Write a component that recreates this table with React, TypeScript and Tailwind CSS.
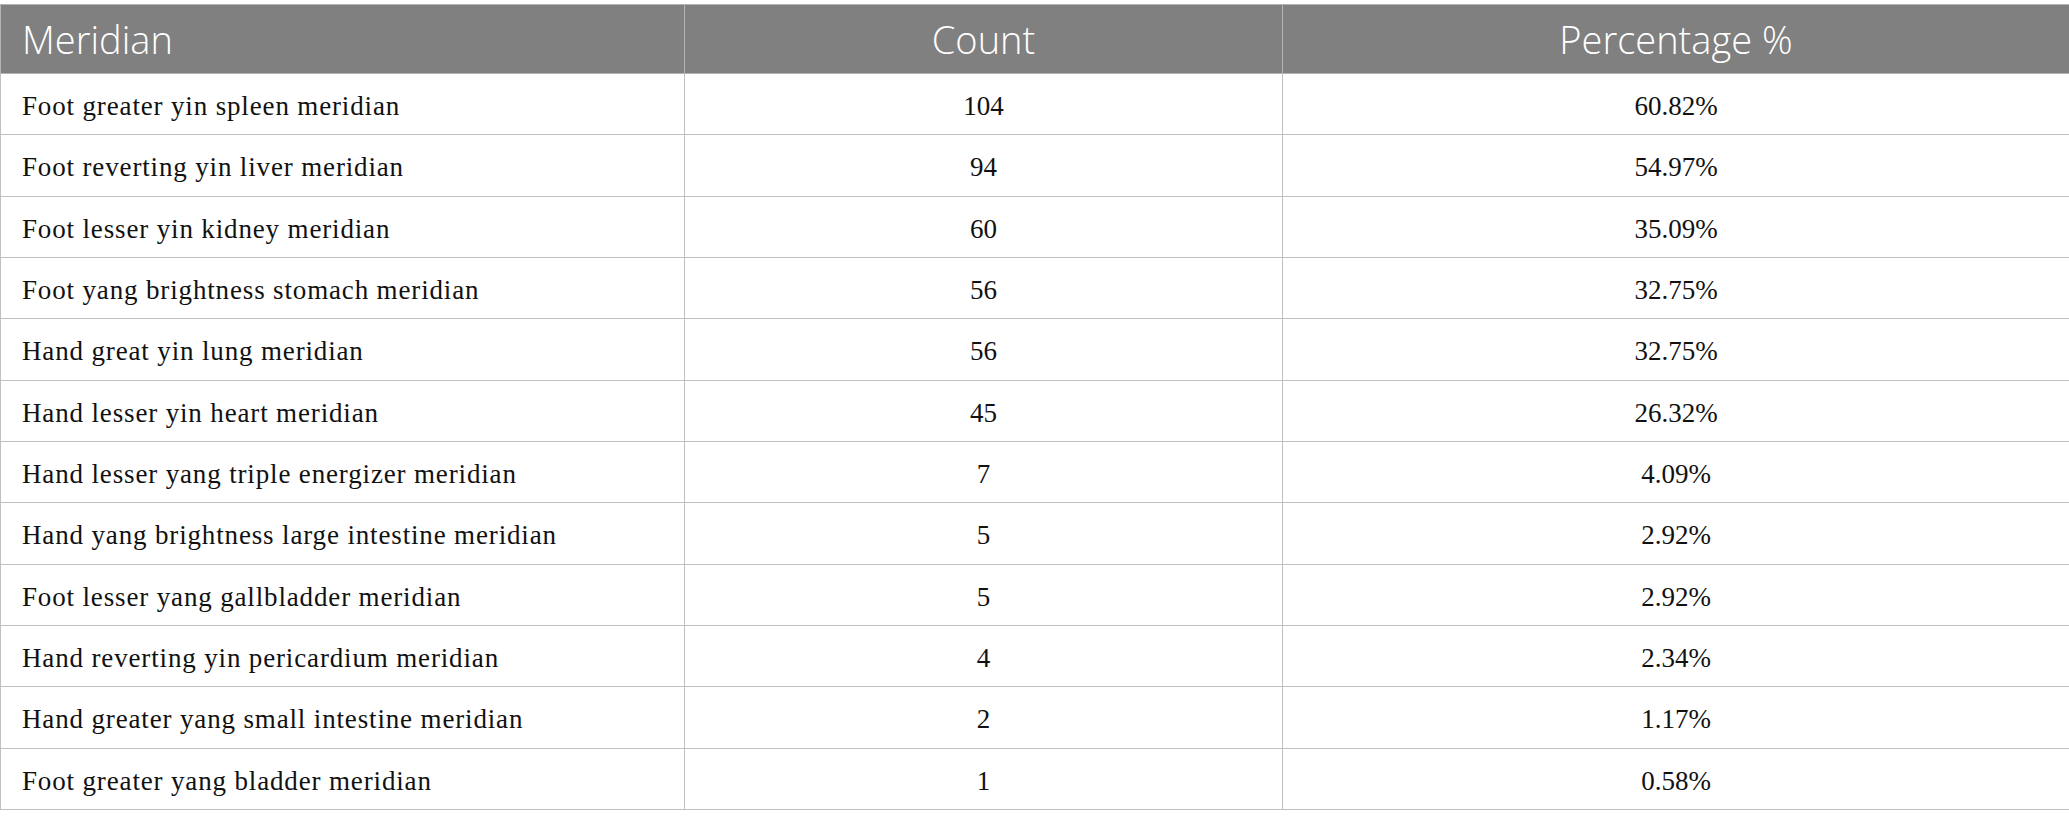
import React from "react";

const rows: [string, string, string][] = [
  ["Foot greater yin spleen meridian", "104", "60.82%"],
  ["Foot reverting yin liver meridian", "94", "54.97%"],
  ["Foot lesser yin kidney meridian", "60", "35.09%"],
  ["Foot yang brightness stomach meridian", "56", "32.75%"],
  ["Hand great yin lung meridian", "56", "32.75%"],
  ["Hand lesser yin heart meridian", "45", "26.32%"],
  ["Hand lesser yang triple energizer meridian", "7", "4.09%"],
  ["Hand yang brightness large intestine meridian", "5", "2.92%"],
  ["Foot lesser yang gallbladder meridian", "5", "2.92%"],
  ["Hand reverting yin pericardium meridian", "4", "2.34%"],
  ["Hand greater yang small intestine meridian", "2", "1.17%"],
  ["Foot greater yang bladder meridian", "1", "0.58%"],
];

export default function App() {
  return (
    <div className="w-[2069px] h-[828px] bg-white pt-[4px] overflow-hidden">
      <table className="w-[2069px] border-collapse table-fixed">
        <colgroup>
          <col className="w-[684px]" />
          <col className="w-[598px]" />
          <col className="w-[787px]" />
        </colgroup>
        <thead>
          <tr className="h-[69px] bg-[#808080] text-white font-['Open_Sans',sans-serif] text-[38px] leading-none">
            <th className="border border-[#b4b4b4] text-left pl-[21px] font-light">Meridian</th>
            <th className="border border-[#b4b4b4] text-center font-light">Count</th>
            <th className="border border-[#b4b4b4] text-center font-light">Percentage %</th>
          </tr>
        </thead>
        <tbody className="font-['Liberation_Serif',serif] text-[27px] text-[#111]">
          {rows.map((r, i) => (
            <tr key={i} className="h-[61.33px]">
              <td className="border border-[#c0c0c0] pl-[21px] pt-[4px] align-middle tracking-[0.85px]">{r[0]}</td>
              <td className="border border-[#c0c0c0] text-center pt-[4px] align-middle">{r[1]}</td>
              <td className="border border-[#c0c0c0] text-center pt-[4px] align-middle">{r[2]}</td>
            </tr>
          ))}
        </tbody>
      </table>
    </div>
  );
}
